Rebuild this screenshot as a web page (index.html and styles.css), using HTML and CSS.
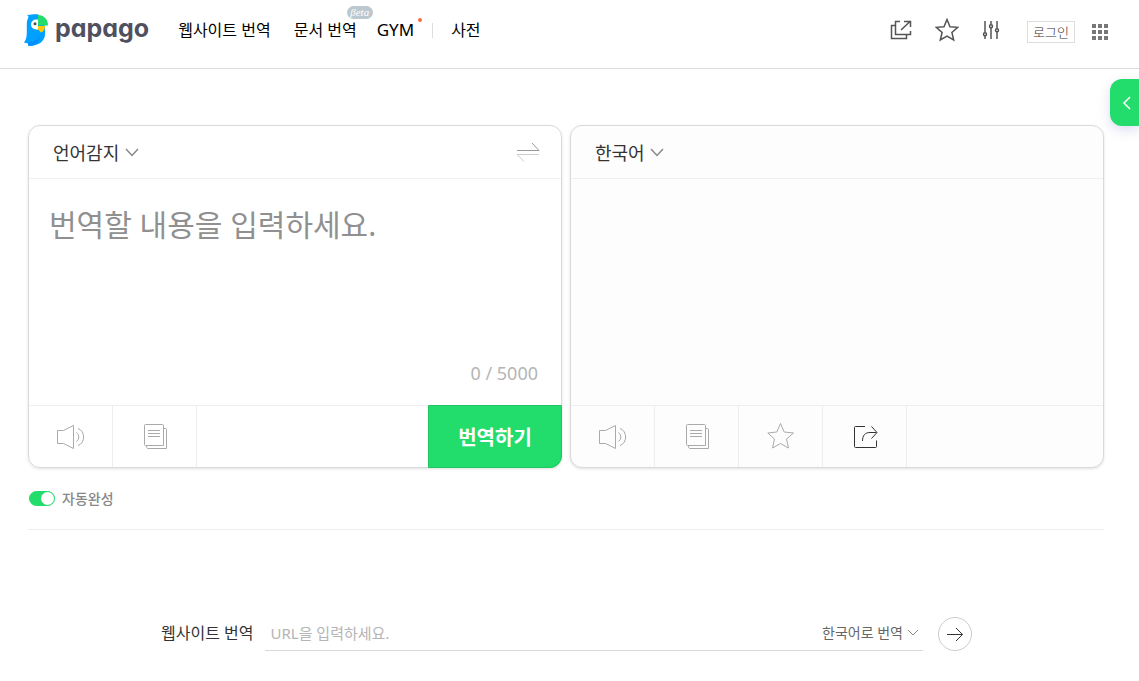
FILE: index.html
```html
<!DOCTYPE html>
<html lang="ko">
  <head>
    <meta charset="UTF-8" />
    <meta name="viewport" content="width=device-width, initial-scale=1.0" />
    <title>papago</title>
    <link rel="stylesheet" href="styles.css">
  </head>
  <body>
    <header class="header">
      <a href="#" class="logo">
        <svg width="24" height="32" viewBox="0 0 24 32">
          <path d="M3 .8C6 1.200 8 .2 11.500 .2H14L21 12V20C21 27 15 32 4.500 32L4 29.500L0 28.500C2 26 2.800 23 2.800 18V9C2.800 6 4.500 4 4.500 2.500Z" fill="#00a0ff" />
          <path d="M4 28C10 28 14 26 16 21C17 27 12 32 4.500 32Z" fill="#0090ff" />
          <path d="M14 5.500H12A5 5 0 0 0 12 15.500H14Z" fill="#fff" />
          <circle cx="11" cy="9.800" r="1.500" fill="#4b4b5b" />
          <path d="M14 1C20 1 24 5.500 24 11.500H14Z" fill="#22dc6c" />
          <path d="M14 12H21C21 15.500 19 18 17 18.500L14 15.500Z" fill="#ffc800" />
        </svg>
        <span class="logo-text">papago</span>
      </a>
      <nav class="nav">
        <a href="#" class="nav-site">웹사이트 번역</a>
        <a href="#" class="nav-doc">문서 번역<span class="beta">βeta</span></a>
        <a href="#" class="nav-gym">GYM<span class="dot"></span></a>
        <a href="#" class="nav-dict">사전</a>
      </nav>
      <div class="tools">
        <button type="button" class="icon-btn" aria-label="새 창">
          <svg width="22" height="22" viewBox="0 0 22 22" class="line-dark">
            <path d="M10 2.500H5.500V15.500H20.500V12M5.500 6.500H1.500V19.500H16.500V15.500M11 11L20 2.500M14 2.500H20.500V8" />
          </svg>
        </button>
        <button type="button" class="icon-btn" aria-label="즐겨찾기">
          <svg width="24" height="24" viewBox="0 0 24 24" class="line-dark">
            <path d="M12 1.500L15 8.700L22.700 9.300L16.900 14.400L18.700 22L12 18L5.300 22L7.100 14.400L1.300 9.300L9 8.700Z" />
          </svg>
        </button>
        <button type="button" class="icon-btn" aria-label="설정">
          <svg width="18" height="20" viewBox="0 0 18 20" class="line-dark">
            <path d="M3 1V12.500M3 16V19M9 1V4.500M9 8V19M15 1V8.500M15 12V19" />
            <circle cx="3" cy="14.200" r="1.500" />
            <circle cx="9" cy="6.200" r="1.500" />
            <circle cx="15" cy="10.200" r="1.500" />
          </svg>
        </button>
        <a href="#" class="login">로그인</a>
        <button type="button" class="icon-btn" aria-label="서비스 더보기">
          <svg width="16" height="16" viewBox="0 0 16 16" fill="#777">
            <path d="M0 0h4v4h-4zM6 0h4v4h-4zM12 0h4v4h-4zM0 6h4v4h-4zM6 6h4v4h-4zM12 6h4v4h-4zM0 12h4v4h-4zM6 12h4v4h-4zM12 12h4v4h-4z" />
          </svg>
        </button>
      </div>
    </header>

    <button type="button" class="side-tab" aria-label="열기">
      <svg width="9" height="14" viewBox="0 0 9 14"><path d="M8 1L2 7L8 13" /></svg>
    </button>

    <main class="main">
      <div class="panels">
        <section class="panel">
          <div class="panel-head">
            <label class="lang">
              <select aria-label="입력 언어">
                <option>언어감지</option>
              </select>
              <svg width="14" height="9" viewBox="0 0 14 9"><path d="M1 1L7 7.500L13 1" /></svg>
            </label>
            <button type="button" class="icon-btn" aria-label="언어 바꾸기">
              <svg width="24" height="22" viewBox="0 0 24 22" class="swap">
                <path d="M1 8.500H23L16 1" stroke="#999" />
                <path d="M23 12.500H1L8 19.500" stroke="#ccc" />
              </svg>
            </button>
          </div>
          <div class="panel-body">
            <textarea class="source" aria-label="번역할 내용" placeholder="번역할 내용을 입력하세요."></textarea>
            <div class="count">0 / 5000</div>
          </div>
          <div class="panel-foot">
            <button type="button" class="tool" aria-label="듣기">
              <svg width="30" height="26" viewBox="0 0 30 26">
                <path d="M1.500 6.500H7.500L17.500 1.500V24.500L7.500 19.500H1.500ZM20.500 8.500A5.500 5.500 0 0 1 20.500 17.500M22 4.500C29.500 7 29.500 19 22 21.500" />
              </svg>
            </button>
            <button type="button" class="tool" aria-label="복사">
              <svg width="26" height="26" viewBox="0 0 26 26">
                <path d="M3.500 .5H20.500Q21.500 .5 21.500 1.500V21.500H3.500Q2.500 21.500 2.500 20.500V1.500Q2.500 .5 3.500 .5ZM21.500 4.500H23.500Q24.500 4.500 24.500 5.500V24.500H5.500Q4.500 24.500 4.500 21.500M6 6.500H18M6 9.500H18M6 12.500H18" />
              </svg>
            </button>
            <button type="submit" class="translate">번역하기</button>
          </div>
        </section>

        <section class="panel panel-target">
          <div class="panel-head">
            <label class="lang">
              <select aria-label="번역 언어">
                <option>한국어</option>
              </select>
              <svg width="14" height="9" viewBox="0 0 14 9"><path d="M1 1L7 7.500L13 1" /></svg>
            </label>
          </div>
          <div class="panel-body"></div>
          <div class="panel-foot">
            <button type="button" class="tool" aria-label="듣기">
              <svg width="30" height="26" viewBox="0 0 30 26">
                <path d="M1.500 6.500H7.500L17.500 1.500V24.500L7.500 19.500H1.500ZM20.500 8.500A5.500 5.500 0 0 1 20.500 17.500M22 4.500C29.500 7 29.500 19 22 21.500" />
              </svg>
            </button>
            <button type="button" class="tool" aria-label="복사">
              <svg width="26" height="26" viewBox="0 0 26 26">
                <path d="M3.500 .5H20.500Q21.500 .5 21.500 1.500V21.500H3.500Q2.500 21.500 2.500 20.500V1.500Q2.500 .5 3.500 .5ZM21.500 4.500H23.500Q24.500 4.500 24.500 5.500V24.500H5.500Q4.500 24.500 4.500 21.500M6 6.500H18M6 9.500H18M6 12.500H18" />
              </svg>
            </button>
            <button type="button" class="tool" aria-label="즐겨찾기">
              <svg width="28" height="28" viewBox="0 0 28 28">
                <path d="M13.500 .5L17.200 9L26.500 10L19.500 16L21.500 25L13.500 20.500L5.500 25L7.500 16L.8 10L9.800 9Z" />
              </svg>
            </button>
            <button type="button" class="tool tool-share" aria-label="공유">
              <svg width="26" height="26" viewBox="0 0 26 26">
                <path d="M13 2.500H3.500Q2.500 2.500 2.500 3.500V22.500Q2.500 23.500 3.500 23.500H23.500Q24.500 23.500 24.500 22.500V16.500M10.500 17C10.500 11.500 13 8.500 18 8.500H24.500M19.500 2.500L25 8.500L19.500 14.500" />
              </svg>
            </button>
          </div>
        </section>
      </div>

      <label class="auto">
        <input type="checkbox" class="switch" checked>
        자동완성
      </label>

      <form class="site-form">
        <label for="site-url" class="site-label">웹사이트 번역</label>
        <div class="site-field">
          <input type="text" id="site-url" placeholder="URL을 입력하세요.">
          <label class="lang lang-small">
            <select aria-label="웹사이트 번역 언어">
              <option>한국어로 번역</option>
            </select>
            <svg width="10" height="6" viewBox="0 0 10 6"><path d="M0 0L5 5L10 0" /></svg>
          </label>
        </div>
        <button type="button" class="go" aria-label="이동">
          <svg width="17" height="15" viewBox="0 0 17 15"><path d="M0 7.500H15.500M9 1L15.500 7.500L9 14" /></svg>
        </button>
      </form>
    </main>
  </body>
</html>
```
FILE: styles.css
```css
* {
  box-sizing: border-box;
}
body {
  margin: 0;
  background-color: #fff;
  color: #333;
  font-family: "Noto Sans", "Noto Sans CJK KR", sans-serif;
}
a {
  color: inherit;
  text-decoration: none;
}
button,
input,
select,
textarea {
  margin: 0;
  padding: 0;
  border: none;
  background: none;
  font-family: inherit;
  color: inherit;
}
button,
select {
  cursor: pointer;
}
svg {
  display: block;
  flex: none;
}
.header {
  display: flex;
  align-items: center;
  height: 69px;
  padding: 0 31px 8px 24px;
  border-bottom: 1px solid #ddd;
}
.logo {
  display: flex;
  align-items: center;
  gap: 7px;
}
.logo-text {
  font-family: "Inter", sans-serif;
  font-feature-settings: "cv11";
  font-size: 25px;
  font-weight: 700;
  line-height: 28px;
  padding-bottom: 4px;
  color: #50505f;
}
.nav {
  display: flex;
  align-items: center;
  margin-left: 29px;
  font-size: 16px;
  line-height: 24px;
  color: #000;
  white-space: nowrap;
}
.nav a {
  position: relative;
}
.nav-doc {
  margin-left: 23px;
}
.nav-gym {
  margin-left: 20px;
  font-size: 17px;
}
.nav-dict {
  margin-left: 37px;
}
.nav-dict::before {
  content: "";
  position: absolute;
  left: -19px;
  top: 5px;
  width: 1px;
  height: 15px;
  background-color: #ddd;
}
.beta {
  position: absolute;
  right: -16px;
  top: -12px;
  width: 26px;
  height: 13px;
  border-radius: 7px;
  background-color: #bcc8d0;
  color: #fff;
  font-family: "Liberation Serif", serif;
  font-size: 11px;
  font-style: italic;
  line-height: 12px;
  text-align: center;
}
.dot {
  position: absolute;
  right: -8px;
  top: 0;
  width: 4px;
  height: 4px;
  border-radius: 50%;
  background-color: #ff6c3a;
}
.tools {
  display: flex;
  align-items: center;
  margin-left: auto;
}
.icon-btn {
  margin-left: 23px;
}
.login {
  margin: 4px -6px 0 27px;
  padding: 0 5px;
  border: 1px solid #ddd;
  font-size: 13px;
  font-weight: 300;
  line-height: 20px;
  color: #333;
}
.login + .icon-btn {
  margin-top: 4px;
}
.line-dark {
  fill: none;
  stroke: #555;
  stroke-width: 1.500;
}
.side-tab {
  position: absolute;
  right: 0;
  top: 79px;
  width: 29px;
  height: 47px;
  padding-left: 12px;
  border-radius: 12px 0 0 12px;
  background-color: #22dc6c;
  box-shadow: 0 4px 12px rgba(80, 80, 200, 0.2);
}
.side-tab svg {
  fill: none;
  stroke: #fff;
  stroke-width: 1.500;
}
.main {
  padding: 56px 35px 30px 28px;
}
.panels {
  display: grid;
  grid-template-columns: 1fr 1fr;
  gap: 8px;
}
.panel {
  display: flex;
  flex-direction: column;
  border: 1px solid #dadada;
  border-radius: 12px;
  box-shadow: 0 1px 3px rgba(0, 0, 0, 0.12);
}
.panel-target {
  background-color: #fdfdfd;
}
.panel-head {
  display: flex;
  align-items: center;
  justify-content: space-between;
  height: 53px;
  padding: 1px 21px 0 24px;
  border-bottom: 1px solid #f0f0f0;
}
.lang {
  display: flex;
  align-items: center;
  gap: 5px;
}
.lang select {
  appearance: none;
  font-size: 18px;
  line-height: 26px;
}
.lang svg {
  fill: none;
  stroke: #888;
  stroke-width: 1.500;
}
.swap {
  fill: none;
}
.panel-body {
  display: flex;
  flex-direction: column;
  height: 226px;
  padding: 24px 23px 19px 20px;
}
.source {
  flex: 1;
  width: 100%;
  resize: none;
  outline: none;
  font-size: 30px;
  line-height: 44px;
}
.source::placeholder {
  color: #909090;
}
.count {
  align-self: flex-end;
  font-size: 18px;
  line-height: 26px;
  color: #b5b5b5;
}
.panel-foot {
  display: flex;
  height: 62px;
  border-top: 1px solid #eee;
}
.tool {
  display: flex;
  align-items: center;
  justify-content: center;
  width: 84px;
  border-right: 1px solid #eee;
}
.tool svg {
  fill: none;
  stroke: #aaa;
}
.tool-share svg {
  stroke: #333;
}
.translate {
  width: 134px;
  margin: -1px -1px -1px auto;
  border: 1px solid #1fc661;
  border-radius: 0 0 12px 0;
  background-color: #22dc6c;
  color: #fff;
  font-size: 20px;
  font-weight: 700;
}
.auto {
  display: flex;
  align-items: center;
  gap: 7px;
  padding: 20px 1px;
  border-bottom: 1px solid #eee;
  font-size: 14px;
  font-weight: 500;
  line-height: 21px;
  color: #888;
}
.switch {
  appearance: none;
  display: flex;
  justify-content: flex-end;
  width: 26px;
  height: 15px;
  border: 1px solid #bbb;
  border-radius: 8px;
  background-color: #bbb;
}
.switch:checked {
  border-color: #22dc6c;
  background-color: #22dc6c;
}
.switch::before {
  content: "";
  width: 13px;
  height: 13px;
  border-radius: 50%;
  background-color: #fff;
}
.site-form {
  display: flex;
  align-items: center;
  padding: 87px 132px 0 133px;
}
.site-label {
  padding-bottom: 2px;
  font-size: 16px;
  line-height: 24px;
  white-space: nowrap;
}
.site-field {
  display: flex;
  align-items: center;
  flex: 1;
  height: 34px;
  margin: 0 15px 0 12px;
  padding: 0 5px 2px 5px;
  border-bottom: 1px solid #d8d8d8;
}
.site-field input {
  flex: 1;
  min-width: 0;
  outline: none;
  font-size: 15px;
  line-height: 24px;
}
.site-field input::placeholder {
  color: #b5b5b5;
}
.lang-small {
  color: #666;
}
.lang-small select {
  font-size: 14px;
  line-height: 22px;
}
.lang-small svg {
  stroke-width: 1;
}
.go {
  display: flex;
  align-items: center;
  justify-content: center;
  width: 34px;
  height: 34px;
  border: 1px solid #ccc;
  border-radius: 50%;
}
.go svg {
  fill: none;
  stroke: #333;
}
```
